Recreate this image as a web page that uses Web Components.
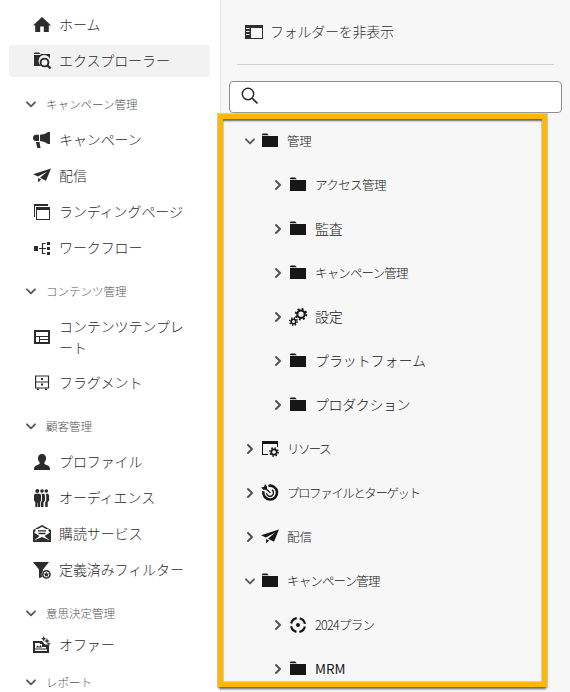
<!DOCTYPE html>
<html lang="ja"><head><meta charset="utf-8"><title>エクスプローラー</title>
<style>html,body{margin:0;height:692px;overflow:hidden;background:#fff}body{font-family:"Noto Sans CJK JP","Noto Sans",sans-serif;font-weight:300;color:#2c2c2c}</style></head>
<body><explorer-app></explorer-app>
<script>
const ICONS={
home:'<path d="M9 1 0 9.400h2.200V16h5v-5.500h3.600V16h5V9.400H18L15 6.600 13 4.700z"/>',
explore:'<path d="M1 1.500Q1 .5 2 .5h4L7.500 2H17v4.700A6 6 0 1 0 8.200 14H1z"/><circle cx="11.500" cy="10.500" r="3.900" fill="none" stroke="currentColor" stroke-width="1.900"/><path d="m14.300 13.300 3.300 3.200" stroke="currentColor" stroke-width="2.300"/><path d="M1 2.500H7.500" stroke="#f2f2f2" stroke-width="1"/>',
horn:'<path d="M6 3.800V10H3Q0 9.800 0 7t3-3.200zM7 3.800q5-.4 8-2.800h2v12h-2q-3-2.500-8-3zM2.900 11h3.600l1 6H4.300z"/>',
plane:'<path d="M18 1.500 0 7.300l5 2.300L14.300 4.500 7 10.700l6 3.100zM5.100 10.900V15.500l3-2.900z"/>',
windows:'<path d="M1 14V1h14v2H2v11z"/><path d="M3 4h14v13H3zm1 3v9h12V7z" fill-rule="evenodd"/>',
flow:'<path d="M1 7h4v5H1zM14 3h3v3h-3zM14 8h3v3h-3zM14 13h3v3h-3z"/><path d="M6 9.500h7M12.500 4.500H9.500v10h3" fill="none" stroke="currentColor" stroke-width="1.200"/>',
template:'<path fill="none" stroke="currentColor" stroke-width="2" d="M2 3h14v12H2z"/><path fill="none" stroke="currentColor" stroke-width="1" d="M2 8.500h14M6.500 8.500V15M6.500 11.500H16"/>',
cabinet:'<path fill="none" stroke="currentColor" stroke-width="1.200" d="M2.600 2h12.900v12H2.600zM2 8h14"/><path d="M8 4h2v2H8zM8 9.500h2v2H8zM4 14.500h2V16H4zM12 14.500h2V16h-2z"/>',
person:'<path d="M9 1c2.600 0 4 1.700 4 4.200 0 1.900-.7 3.200-1.600 4v1.500c0 1 5.600 1.200 5.600 5V17H1v-1.300c0-3.800 5.600-4 5.600-5V9.200C5.700 8.400 5 7.100 5 5.200 5 2.700 6.400 1 9 1"/>',
people:'<circle cx="4.300" cy="2" r="2"/><circle cx="9" cy="2" r="1.800"/><circle cx="13.300" cy="2" r="1.800"/><path d="M2.500 4.800h4q1.500 0 1.500 1.800V12l-1 .8V18H5v-4h-.5v4H2.300v-5L1 11.500V6.600q0-1.800 1.500-1.800M8.500 4.800h1.900q1.600 0 1.600 2.200v4.500l-1.500 1.800V18H7.800v-5L9 12V6.500zM12.700 4.800h1.700q1.700 0 1.700 2.200v4.500l-1.400 1.800V18h-2.500v-5l1-1V6.500z"/>',
mail:'<path d="m9 0 9 5v12H0V5z"/><path d="m9 1.800 4 2.200h2.500v2L17 7.500 11.500 11 17 15.500 9 12 1 15.500 6.500 11 1 7.500 2.500 6V4H5z" fill="#fff"/><path d="M5 5.800h8M5.500 8.500h7" stroke="currentColor" stroke-width="1.300"/>',
filter:'<path d="M0 1h16l-6 7.500V10a5 5 0 0 0-.5 6L6 17V8.500z"/><circle cx="13.400" cy="13.400" r="3.600" fill="none" stroke="currentColor" stroke-width="1.600"/><path d="m13.400 10.900.8 1.700 1.900.2-1.400 1.200.4 1.800-1.700-.9-1.700.9.400-1.800-1.400-1.200 1.900-.2z"/>',
offer:'<path fill-rule="evenodd" d="M0 5h9l3 3.500h4V17H0zm2 2v5.500h11V11H9V8H7V7zm0 6.500V15h12v-1.500z"/><path d="m3 11.500 1.500-2L6 11l1.500-2L9 11.500z"/><path d="m10.700 0 .8 2 2 .7-2 .8-.8 2-.8-2-2-.8 2-.7zM14 2l.8 2.200 2.200.8-2.200.8L14 8l-.8-2.200L11 5l2.200-.8zM16 6l.5 1.300 1.500.5-1.500.5L16 10l-.6-1.700-1.400-.5 1.400-.5z"/>',
folder:'<path d="M1 3.200V2.700Q1 1.500 2 1.500h4.200L7.800 3.200zM1 4h16v11H1z"/>',
rail:'<path fill-rule="evenodd" d="M0 2h18v14H0zm6 3v10h11V5z"/><path d="M1 5.500h3.500M1 8.500h3.500M1 11.500h3.500" stroke="#f7f7f7" stroke-width="1"/>',
search:'<circle cx="7" cy="7" r="5.700" fill="none" stroke="currentColor" stroke-width="1.500"/><path d="m11 11 5.500 5.500" stroke="currentColor" stroke-width="1.700"/>',
gears:'<circle cx="12" cy="6.200" r="3.700" fill="none" stroke="currentColor" stroke-width="2.100"/><circle cx="12" cy="6.200" r="5.300" fill="none" stroke="currentColor" stroke-width="1.800" stroke-dasharray="2 2.163"/><circle cx="4.500" cy="13.500" r="2.300" fill="none" stroke="currentColor" stroke-width="1.600"/><circle cx="4.500" cy="13.500" r="3.700" fill="none" stroke="currentColor" stroke-width="1.500" stroke-dasharray="1.400 1.506"/>',
resource:'<path d="M1 1h16v6h-1V4H2v10h5v1H1z"/><circle cx="13" cy="12" r="2.700" fill="none" stroke="currentColor" stroke-width="1.700"/><circle cx="13" cy="12" r="4.100" fill="none" stroke="currentColor" stroke-width="1.500" stroke-dasharray="1.500 1.720"/>',
target:'<path fill="none" stroke="currentColor" stroke-width="2.600" d="M7.500 1.900A6.900 6.900 0 1 1 2.400 7.300"/><path fill="none" stroke="currentColor" stroke-width="1.300" d="M11 5.900A3.500 3.500 0 1 1 5.500 9"/><path d="M0 3.500 3 3 4 0l2 2.500v2.200l3.800 3.800L9 9.200 4.800 5.800H2.500z"/>',
plan:'<circle cx="9" cy="9" r="7" fill="none" stroke="currentColor" stroke-width="2.200" stroke-dasharray="8 2.996" stroke-dashoffset="-1.498"/><circle cx="9" cy="9" r="2"/>',
down:'<path fill="none" stroke="#5a5a5a" stroke-width="1.900" stroke-linecap="round" stroke-linejoin="round" d="m5 7.300 4 4 4-4"/>',
right:'<path fill="none" stroke="#505050" stroke-width="1.900" stroke-linecap="round" stroke-linejoin="round" d="m7 5 4 4-4 4"/>'};
const define=(name,css,html)=>customElements.define(name,class extends HTMLElement{connectedCallback(){
 if(this.shadowRoot)return;const t=document.createElement('template');
 t.innerHTML='<style>'+css+'</style>'+(typeof html==='function'?html(this):html);
 this.attachShadow({mode:'open'}).append(t.content.cloneNode(true));}});
define('ui-icon',':host{display:block;flex:none;width:18px;height:18px}svg{display:block;overflow:visible}',e=>`<svg width="18" height="18" viewBox="0 0 18 18" fill="currentColor">${ICONS[e.getAttribute('name')]}</svg>`);
define('nav-item',':host{display:flex;align-items:center;box-sizing:border-box;min-height:32px;padding-left:24px;gap:8px;border-radius:4px;font-size:14px;line-height:21px;margin-bottom:4px}:host([active]){background:#f2f2f2}:host([last]){margin-bottom:0}:host([tall]){height:52px}:host([short]){min-height:24px;margin-bottom:-2px}span{letter-spacing:-.1px;max-width:127px;word-break:break-all;padding-bottom:1px}',e=>`<ui-icon name="${e.getAttribute('icon')}"></ui-icon><span><slot></slot></span>`);
define('nav-section',':host{display:flex;align-items:center;box-sizing:border-box;height:47px;padding:7px 0 0 13px;gap:6px;font-size:11.500px;line-height:18px;color:#585858}span{padding-bottom:1px}','<ui-icon name="down"></ui-icon><span><slot></slot></span>');
define('tree-row',':host{display:flex;align-items:center;height:44px;padding-left:20px;font-size:12.500px;font-weight:300;color:#161616}:host([child]){padding-left:48px}.i{margin:0 8px 0 2px}span{white-space:nowrap;letter-spacing:var(--ls,0px);padding-bottom:2px}',e=>`<ui-icon name="${e.hasAttribute('open')?'down':'right'}"></ui-icon><ui-icon class="i" name="${e.getAttribute('icon')||'folder'}"></ui-icon><span><slot></slot></span>`);
define('search-field',':host{display:flex;align-items:center;box-sizing:border-box;height:32px;margin:16px 8px 0 8px;padding:0 0 2px 11px;background:#fff;border:1px solid #8c8c8c;border-radius:4px}','<ui-icon name="search"></ui-icon>');
define('highlight-frame',':host{position:absolute;left:-3px;top:114px;width:329px;height:573px;box-sizing:border-box;border:5px solid #fcb900;box-shadow:0 3px 2px -1px #666,0 0 1px 1px #ccd0d5,inset 0 3px 2px -1px #666,inset 0 0 1px 1px #ccd0d5;pointer-events:none}','');
define('folder-panel',':host{display:block;position:relative;background:#f7f7f7;border-left:1px solid #e4e4e4;height:692px}.head{display:flex;align-items:center;gap:7px;height:64px;padding-left:24px;font-size:14px;letter-spacing:-.25px;color:#303030}.head span{padding-bottom:2px}hr{border:0;height:1px;background:#d2d2d2;margin:0 16px}.tree{padding-top:6px}',
`<div class="head"><ui-icon name="rail"></ui-icon><span>フォルダーを非表示</span></div><hr><search-field></search-field><div class="tree">
<tree-row open style="--ls:-.2px">管理</tree-row>
<tree-row child style="--ls:-.6px">アクセス管理</tree-row><tree-row child style="font-size:14px;--ls:-.3px">監査</tree-row><tree-row child style="--ls:-.85px">キャンペーン管理</tree-row><tree-row child icon="gears" style="font-size:14px;--ls:-.3px">設定</tree-row><tree-row child style="font-size:14px;--ls:-.1px">プラットフォーム</tree-row><tree-row child style="font-size:14px;--ls:-.4px">プロダクション</tree-row>
<tree-row icon="resource" style="--ls:-1.600px">リソース</tree-row><tree-row icon="target" style="--ls:-1.450px">プロファイルとターゲット</tree-row><tree-row icon="plane" style="--ls:-.1px">配信</tree-row><tree-row open style="--ls:-.85px">キャンペーン管理</tree-row><tree-row child icon="plan" style="--ls:-.7px">2024プラン</tree-row><tree-row child style="font-size:13.500px;font-weight:400">MRM</tree-row></div><highlight-frame></highlight-frame>`);
define('side-nav',':host{display:block;padding:9px 10px 0 9px;height:692px;box-sizing:border-box;overflow:hidden}',
`<nav-item icon="home">ホーム</nav-item><nav-item icon="explore" active last>エクスプローラー</nav-item>
<nav-section>キャンペーン管理</nav-section><nav-item icon="horn">キャンペーン</nav-item><nav-item icon="plane">配信</nav-item><nav-item icon="windows">ランディングページ</nav-item><nav-item icon="flow" last>ワークフロー</nav-item>
<nav-section>コンテンツ管理</nav-section><nav-item icon="template" tall>コンテンツテンプレート</nav-item><nav-item icon="cabinet" last>フラグメント</nav-item>
<nav-section>顧客管理</nav-section><nav-item icon="person">プロファイル</nav-item><nav-item icon="people">オーディエンス</nav-item><nav-item icon="mail">購読サービス</nav-item><nav-item icon="filter" last>定義済みフィルター</nav-item>
<nav-section>意思決定管理</nav-section><nav-item icon="offer" short>オファー</nav-item><nav-section>レポート</nav-section>`);
define('explorer-app',':host{display:grid;grid-template-columns:220px 350px;height:692px;overflow:hidden}','<side-nav></side-nav><folder-panel></folder-panel>');
</script></body></html>
